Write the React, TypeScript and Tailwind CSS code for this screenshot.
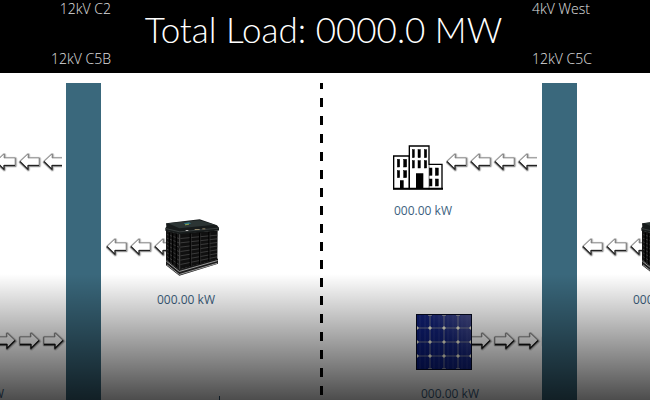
import React from "react";

type Direction = "left" | "right";

const LEFT_ARROW = "M1 8.5 L9 1 V5 H20 V12 H9 V16 Z";
const RIGHT_ARROW = "M20 8.5 L12 1 V5 H1 V12 H12 V16 Z";

function ArrowStrip({ direction, className }: { direction: Direction; className: string }) {
  const path = direction === "left" ? LEFT_ARROW : RIGHT_ARROW;
  const offset = direction === "left" ? 0 : -2;
  return (
    <svg className={`block h-5 shrink-0 ${className}`} aria-hidden="true">
      {[0, 24, 48, 72].map((x) => (
        <g key={x} transform={`translate(${x + offset} 0)`} strokeLinejoin="round">
          <path d={path} fill="none" stroke="#000" strokeWidth="4" opacity="0.12" transform="translate(0.4 0.8)" />
          <path d={path} fill="none" stroke="#000" strokeWidth="2.4" opacity="0.35" transform="translate(0.2 0.7)" />
          <path d={path} fill="#fff" stroke="#777" strokeWidth="0.6" />
          {direction === "left" ? (
            <path d="M1 8.5 L9 16.4 V12.5 H20" fill="none" stroke="#222" strokeWidth="1.2" />
          ) : (
            <path d="M20 8.5 L12 16.4 V12.5 H1" fill="none" stroke="#111" strokeWidth="1.3" />
          )}
        </g>
      ))}
    </svg>
  );
}

function Building() {
  const windows = [
    [13, 43, 7, 23], [32, 43, 9, 23], [13, 77, 7, 21], [32, 77, 9, 21],
    [58, 14, 6, 24], [75, 14, 7, 24], [94, 14, 7, 24],
    [58, 47, 6, 22], [75, 47, 7, 22], [94, 47, 7, 22],
    [109, 69, 8, 22], [127, 69, 9, 22], [109, 102, 8, 21], [127, 102, 9, 21],
  ];
  return (
    <svg viewBox="0 0 150 135" className="block h-[45px] w-[50px]" role="img" aria-label="Building">
      <g fill="#fff" stroke="#000" strokeWidth="4">
        <path d="M2 33H49V131H2Z" />
        <path d="M108 58H147V131H108Z" />
        <path d="M49 3H108V131H49Z" />
      </g>
      <path d="M106 60H110V129H106Z" fill="#fff" />
      {windows.map(([x, y, w, h]) => (
        <rect key={`${x}-${y}`} x={x} y={y} width={w} height={h} stroke="#000" strokeWidth="1.5" />
      ))}
      <path d="M21 106H32V131H21ZM69 85H91V131H69ZM0 128H150V134H0Z" />
    </svg>
  );
}

function Battery() {
  return (
    <svg viewBox="0 0 162 170" className="relative block h-[57px] w-[54px] shrink-0" role="img" aria-label="Battery">
      <path d="M3 122 L3 138 L43 170 L159 134 V118 L43 150Z" fill="#1b1b1b" />
      <path d="M4 126 L43 157 L158 124 M6 137 L43 166 L157 132" stroke="#9a9a9a" strokeWidth="3" fill="none" />
      <path d="M3 34 L44 44 L43 152 L3 122Z" fill="#151515" />
      <path d="M44 42 L158 34 L157 120 L43 151Z" fill="#101010" />
      <path
        d="M6 46 L42 58 M6 57 L42 71 M6 68 L42 84 M6 79 L42 97 M6 90 L42 110 M6 101 L42 123 M6 112 L42 136 M46 58 L156 48 M46 71 L156 59 M46 84 L156 70 M46 97 L156 81 M46 110 L156 92 M46 123 L156 103 M46 136 L156 113"
        stroke="#3b3b3b"
        strokeWidth="3"
      />
      <path d="M13 40V128 M23 42V136 M34 44V144 M76 42V142 M104 40V134 M132 38V127" stroke="#000" strokeWidth="4" />
      <path d="M45 46V150 M79 44V140 M107 42V132 M135 40V125" stroke="#353535" strokeWidth="2" />
      <path d="M3 12 L104 0 L156 18 L162 26 V34 L44 45 L1 35 V27 L4 22Z" fill="#171b1b" />
      <path d="M9 12 L103 3 L150 17 L43 27Z" fill="#2c3534" />
      <path d="M2 28 L44 38 L160 27" stroke="#4c5251" strokeWidth="2" fill="none" />
      <path d="M56 12 L72 9 L79 13 L62 16Z" fill="#2a7284" />
      <path d="M60 17 L72 15" stroke="#8ea24c" strokeWidth="3" />
      <path d="M89 31H104 M112 29H121" stroke="#93876a" strokeWidth="3" />
      <path d="M62 34H70" stroke="#bbb" strokeWidth="3" />
    </svg>
  );
}

function SolarPanel() {
  const lines = [14, 28, 42];
  const nodes = [1, 14, 28, 42, 55];
  return (
    <svg viewBox="0 0 56 56" className="block size-14 shrink-0" role="img" aria-label="Solar panel">
      <defs>
        <linearGradient id="cells" x1="0" y1="1" x2="1" y2="0">
          <stop offset="0" stopColor="#06187a" />
          <stop offset="0.55" stopColor="#12227a" />
          <stop offset="1" stopColor="#4c5088" />
        </linearGradient>
      </defs>
      <rect width="56" height="56" fill="url(#cells)" />
      {[4, 9, 18, 23, 32, 37, 46, 51].map((x) => (
        <path key={x} d={`M${x} 0V56`} stroke="#4d5999" strokeWidth="0.7" opacity="0.5" />
      ))}
      {lines.map((p) => (
        <path key={p} d={`M${p} 0V56M0 ${p}H56`} stroke="#8d8f98" strokeWidth="0.8" />
      ))}
      {lines.map((y) =>
        nodes.map((x) => (
          <path key={`${x}-${y}`} d={`M${x - 2} ${y}L${x} ${y - 2}L${x + 2} ${y}L${x} ${y + 2}Z`} fill="#f0eed8" />
        )),
      )}
      {lines.map((x) => (
        <path key={x} d={`M${x - 2} 1H${x + 2}M${x - 2} 55H${x + 2}`} stroke="#cfcdb8" strokeWidth="1" />
      ))}
      <rect x="0.5" y="0.5" width="55" height="55" fill="none" stroke="#05091f" />
    </svg>
  );
}

function Reading({ className = "" }: { className?: string }) {
  return <p className={`text-xs leading-4 whitespace-nowrap text-[#3c5f80] ${className}`}>000.00 kW</p>;
}

function Bus() {
  return <div className="w-[35px] shrink-0 bg-[#3a687c]" />;
}

function Storage() {
  return (
    <div className="min-w-0 flex-1 overflow-hidden pt-[136px] pl-[5px]">
      <div className="flex items-center">
        <ArrowStrip direction="left" className="w-[90px]" />
        <div className="-ml-[31px]">
          <Battery />
        </div>
      </div>
      <Reading className="mt-4 ml-[51px]" />
    </div>
  );
}

function Feeders() {
  return (
    <div className="flex w-[149px] shrink-0 flex-col pt-[62px]">
      <div className="flex items-start">
        <Building />
        <ArrowStrip direction="left" className="mt-2 ml-[3px] w-[91px]" />
      </div>
      <Reading className="mt-[13px] ml-px" />
      <div className="mt-[95px] flex items-center pl-[23px]">
        <SolarPanel />
        <ArrowStrip direction="right" className="w-[70px]" />
      </div>
      <Reading className="mt-4 ml-7" />
    </div>
  );
}

export default function App() {
  return (
    <div className="flex h-screen flex-col overflow-hidden bg-white font-['Open_Sans',sans-serif]">
      <header className="flex h-[73px] shrink-0 overflow-hidden bg-black text-sm leading-5 font-light text-[#e0e0e0]">
        <div className="-mt-px flex w-28 flex-col gap-[30px] pr-px text-right">
          <span>12kV C2</span>
          <span>12kV C5B</span>
        </div>
        <h1 className="flex-1 pt-[7px] pl-[3px] text-center font-['Lato',sans-serif] text-[35px] leading-11 font-light whitespace-nowrap text-white">
          Total Load: 0000.0 MW
        </h1>
        <div className="-mt-px flex w-[118px] flex-col gap-[30px]">
          <span>4kV West</span>
          <span>12kV C5C</span>
        </div>
      </header>
      <main className="relative flex min-h-0 flex-1 overflow-hidden pt-2.5">
        <section className="flex w-80 min-w-0 shrink-0">
          <div className="flex w-[66px] shrink-0 justify-end overflow-hidden">
            <div className="-mr-px">
              <Feeders />
            </div>
          </div>
          <Bus />
          <Storage />
        </section>
        <div className="w-[3px] shrink-0 bg-[repeating-linear-gradient(to_bottom,#000_0_6px,transparent_6px_15px,#000_15px_18px)]" />
        <section className="flex min-w-0 flex-1">
          <div className="w-[70px] shrink-0" />
          <Feeders />
          <Bus />
          <Storage />
        </section>
        <div className="absolute bottom-0 left-[219px] h-1 w-px bg-[#2b5374]" />
        <div className="pointer-events-none absolute inset-x-0 bottom-0 h-[126px] bg-linear-to-b from-transparent to-black/70" />
      </main>
    </div>
  );
}
